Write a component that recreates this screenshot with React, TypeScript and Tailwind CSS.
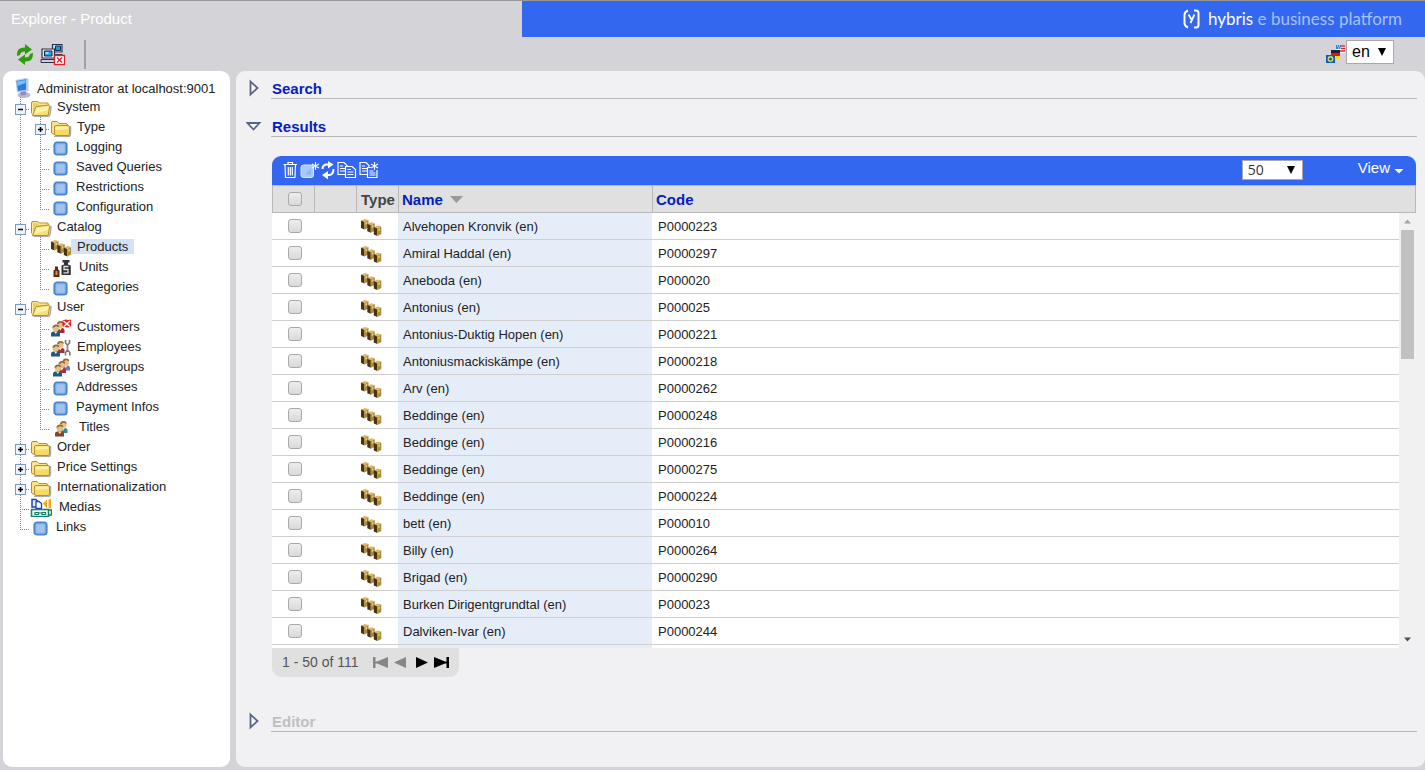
import type { ReactNode } from 'react'
import clsx from 'clsx'

type IconName =
  | 'open'
  | 'closed'
  | 'square'
  | 'boxes'
  | 'units'
  | 'customers'
  | 'employees'
  | 'usergroups'
  | 'titles'
  | 'medias'

type TreeNode = {
  label: string
  icon: IconName
  selected?: boolean
  children?: TreeNode[]
}

const tree: TreeNode[] = [
  {
    label: 'System',
    icon: 'open',
    children: [
      { label: 'Type', icon: 'closed' },
      { label: 'Logging', icon: 'square' },
      { label: 'Saved Queries', icon: 'square' },
      { label: 'Restrictions', icon: 'square' },
      { label: 'Configuration', icon: 'square' },
    ],
  },
  {
    label: 'Catalog',
    icon: 'open',
    children: [
      { label: 'Products', icon: 'boxes', selected: true },
      { label: 'Units', icon: 'units' },
      { label: 'Categories', icon: 'square' },
    ],
  },
  {
    label: 'User',
    icon: 'open',
    children: [
      { label: 'Customers', icon: 'customers' },
      { label: 'Employees', icon: 'employees' },
      { label: 'Usergroups', icon: 'usergroups' },
      { label: 'Addresses', icon: 'square' },
      { label: 'Payment Infos', icon: 'square' },
      { label: 'Titles', icon: 'titles' },
    ],
  },
  { label: 'Order', icon: 'closed' },
  { label: 'Price Settings', icon: 'closed' },
  { label: 'Internationalization', icon: 'closed' },
  { label: 'Medias', icon: 'medias' },
  { label: 'Links', icon: 'square' },
]

const products = [
  ['Alvehopen Kronvik (en)', 'P0000223'],
  ['Amiral Haddal (en)', 'P0000297'],
  ['Aneboda (en)', 'P000020'],
  ['Antonius (en)', 'P000025'],
  ['Antonius-Duktig Hopen (en)', 'P0000221'],
  ['Antoniusmackiskämpe (en)', 'P0000218'],
  ['Arv (en)', 'P0000262'],
  ['Beddinge (en)', 'P0000248'],
  ['Beddinge (en)', 'P0000216'],
  ['Beddinge (en)', 'P0000275'],
  ['Beddinge (en)', 'P0000224'],
  ['bett (en)', 'P000010'],
  ['Billy (en)', 'P0000264'],
  ['Brigad (en)', 'P0000290'],
  ['Burken Dirigentgrundtal (en)', 'P000023'],
  ['Dalviken-Ivar (en)', 'P0000244'],
]

function Box({ x, y }: { x: number; y: number }) {
  return (
    <g transform={`translate(${x} ${y})`}>
      <path d="M0 1.5 4 0 7.5 1 3.5 3z" fill="#d9b868" />
      <path d="M0 1.5 3.5 3V10.5L0 9z" fill="#4a330c" />
      <path d="M3.5 3 7.5 1V8.5L3.5 10.5z" fill="#b08a3a" />
      <path d="M4.5 3.5 6 2.8V5L4.5 5.8z" fill="#e6cd85" />
    </g>
  )
}

function BoxesIcon() {
  return (
    <svg width="21" height="18" viewBox="0 0 21 18" aria-hidden="true">
      <Box x={0} y={0} />
      <Box x={6.3} y={3.2} />
      <Box x={12.8} y={6.5} />
    </svg>
  )
}

function Person({ x, y, shirt }: { x: number; y: number; shirt: string }) {
  return (
    <g transform={`translate(${x} ${y})`}>
      <path d="M0 13V10.5Q0 8 2.500 8H6.500Q9 8 9 10.500V13z" fill={shirt} />
      <path d="M3 8H6.500L4.800 10.500z" fill="#f3e3c8" />
      <circle cx="4.800" cy="4.800" r="3.200" fill="#e8bf88" />
      <path d="M1.500 4.500Q1.500 1 5 1 8.300 1 8.200 3.800 6.500 3.500 5 2.600 3.500 4 1.500 4.500z" fill="#8f6a35" />
    </g>
  )
}

const iconWidths: Record<IconName, string> = {
  open: 'w-[21px]',
  closed: 'w-[21px]',
  square: 'w-5',
  boxes: 'w-[21px]',
  units: 'w-[23px]',
  customers: 'w-[21px]',
  employees: 'w-[21px]',
  usergroups: 'w-[21px]',
  titles: 'w-[23px]',
  medias: 'w-[23px]',
}

const drawings: Record<IconName, ReactNode> = {
  open: (
    <>
      <path d="M3.500 19.500H18Q19.500 19.500 20.300 16L21 9" fill="none" stroke="#777" strokeOpacity=".6" strokeWidth="1.500" />
      <path d="M1.500 16V6Q1.500 4.500 3 4.500H7.500L9.500 6H17Q18.500 6 18.500 7.500V17H3z" fill="#f2cd58" stroke="#b98d2b" />
      <path d="M2.500 17V6.500Q2.500 5.500 3.500 5.500H7L9 7.200H17" fill="none" stroke="#fdf0ae" />
      <path d="M2.500 18.500 5.500 10.500Q6 9.500 7 9.500L18.500 8Q20 8 19.700 9.500L18.500 17Q18.200 18.500 17 18.500z" fill="#fadf6e" stroke="#b98d2b" />
      <path d="M4.500 17 7 10.700 18.500 9.200 17.800 13z" fill="#fdf3b0" />
    </>
  ),
  closed: (
    <>
      <path d="M4 19.500H18.500Q20.500 19.500 20.500 17V9" fill="none" stroke="#777" strokeOpacity=".6" strokeWidth="1.500" />
      <path d="M1.500 16V6Q1.500 4.500 3 4.500H7L9 6.500H16Q17.500 6.500 17.500 8V17H3z" fill="#fbe58a" stroke="#b98d2b" />
      <path d="M4.500 17V10Q4.500 8.500 6 8.500H18Q19.500 8.500 19.500 10V17Q19.500 18.500 18 18.500H6Q4.500 18.500 4.500 17z" fill="#f9d966" stroke="#b98d2b" />
      <path d="M5.500 13V9.500H18.500V12z" fill="#fdefa6" />
    </>
  ),
  square: (
    <>
      <rect x="4.500" y="5.500" width="12" height="12" rx="2.500" fill="#a3c3ec" stroke="#4a86cf" strokeWidth="2.200" />
      <rect x="6" y="7" width="9" height="9" fill="none" stroke="#86aee4" strokeWidth=".8" />
    </>
  ),
  boxes: (
    <>
      <Box x={1} y={3} />
      <Box x={7.3} y={6.200} />
      <Box x={13.800} y={9} />
    </>
  ),
  units: (
    <>
      <path d="M3.500 13.500 5 12.500V9.500H8V12.500L9.500 13.500V20H3.500z" fill="#5b2c12" />
      <path d="M5.500 14H7.500V18H5.500z" fill="#d98b4c" />
      <path d="M11.500 8.500 14 7.500V5.500H12.500V3H19.500V5.500H18V7.500L20.800 8.500V18H11.500z" fill="#333" />
      <path d="M18.500 9.500H14V12.500H18V15.800H13.500" fill="none" stroke="#ddd" strokeWidth="1.300" />
    </>
  ),
  customers: (
    <>
      <Person x={5.500} y={3} shirt="#9c3038" />
      <Person x={1} y={6.500} shirt="#1d5a86" />
      <path d="M12.500 3.500 15.500 2.500 18.500 3 21 2.500V9.500L18 10.500 14.500 10 12.500 9z" fill="#ee1c24" />
      <path d="M13.500 4 20 9.500M20 4 14 9.500" stroke="#fff" strokeWidth="1.500" />
    </>
  ),
  employees: (
    <>
      <Person x={5.500} y={3} shirt="#9c3038" />
      <Person x={1} y={6.500} shirt="#1d5a86" />
      <path d="M15.500 3V6L17.500 8V13L15.500 15.500V18.500M19.500 3V6L17.500 8M17.500 13 19.800 15.500V18.500" fill="none" stroke="#777" strokeWidth="1.600" />
      <path d="M17 9v4" stroke="#bbb" strokeWidth=".8" />
    </>
  ),
  usergroups: (
    <>
      <Person x={11} y={0.500} shirt="#7277c4" />
      <Person x={7} y={3} shirt="#b32d3d" />
      <Person x={3} y={6.500} shirt="#1d5a86" />
    </>
  ),
  titles: (
    <>
      <Person x={8.500} y={3} shirt="#2c8b96" />
      <Person x={5} y={6.500} shirt="#84432a" />
    </>
  ),
  medias: (
    <>
      <path d="M2 2.500H6L8 4.500V10H2z" fill="#e7efff" stroke="#1b47b5" strokeWidth="1.500" />
      <path d="M6 4.500H9L11.500 6.500V11.500H6z" fill="#fff" stroke="#1b47b5" strokeWidth="1.300" />
      <path d="M13 6.500 17 2.500V11.500z" fill="#eda91c" />
      <path d="M18.500 3 21 1.500V12L18.500 10.500z" fill="#eda91c" />
      <path d="M1.500 12.500H18.500V19.500H1.500zM18.500 13H21.500V18H18.500" fill="#eefaf6" stroke="#14826c" strokeWidth="1.500" />
      <path d="M5 15.500h3.500v2H5zM12 15.500h3.500v2H12zM8 16h4" fill="none" stroke="#14826c" strokeWidth="1.200" />
    </>
  ),
}

function TreeIcon({ name }: { name: IconName }) {
  return (
    <span className={clsx('h-5 shrink-0', iconWidths[name])}>
      <svg width="22" height="20" viewBox="0 0 22 20" className="max-w-none" aria-hidden="true">
        {drawings[name]}
      </svg>
    </span>
  )
}

// one 20px cell of the dotted lines in front of a node
function Branch({ kind, last, toggle }: { kind: 'line' | 'elbow'; last?: boolean; toggle?: 'plus' | 'minus' }) {
  return (
    <svg width="20" height="20" viewBox="0 0 20 20" className="shrink-0" aria-hidden="true">
      <path d={last ? 'M10.500 0V13' : 'M10.500 0V20'} stroke="#808080" strokeDasharray="1 1" />
      {kind === 'elbow' && <path d="M10 12.500H20" stroke="#808080" strokeDasharray="1 1" />}
      {toggle && (
        <>
          <rect x="5.500" y="7.500" width="10" height="10" fill="#eef3fb" stroke="#7b9abf" />
          <path d="M8 12.500h5" stroke="#000" strokeWidth="1.500" />
          {toggle === 'plus' && <path d="M10.500 10v5" stroke="#000" strokeWidth="1.500" />}
        </>
      )}
    </svg>
  )
}

function TreeList({ nodes, depth = 0 }: { nodes: TreeNode[]; depth?: number }) {
  return (
    <ul>
      {nodes.map((node, i) => (
        <li key={node.label}>
          <div className="flex h-5 items-start">
            {depth > 0 && <Branch kind="line" />}
            <Branch
              kind="elbow"
              last={i === nodes.length - 1}
              toggle={node.children ? 'minus' : node.icon === 'closed' ? 'plus' : undefined}
            />
            <TreeIcon name={node.icon} />
            <a
              href="#"
              className={clsx('mt-0.5 px-1.5 leading-[15px] whitespace-nowrap', node.selected && 'bg-[#d3e2f5]')}
            >
              {node.label}
            </a>
          </div>
          {node.children && <TreeList nodes={node.children} depth={depth + 1} />}
        </li>
      ))}
    </ul>
  )
}

function Section({ title, open, disabled }: { title: string; open?: boolean; disabled?: boolean }) {
  return (
    <div className="flex h-7 shrink-0">
      <button type="button" aria-label={`Toggle ${title}`} className="flex w-[35px] items-center justify-center pt-1.5">
        <svg width="16" height="18" viewBox="0 0 16 18" aria-hidden="true">
          {open ? (
            <path d="M1.500 6H13.500L7.500 12.500z" fill="#f6f8ff" stroke="#5a6286" strokeWidth="1.800" />
          ) : (
            <path d="M4.500 2.500V15.500L11.500 9z" fill="#f6f8ff" stroke="#5a6286" strokeWidth="1.800" />
          )}
        </svg>
      </button>
      <h2
        className={clsx(
          'flex-1 border-b border-[#b8b8bc] pt-[9px] pl-px text-[15px] leading-[18px] font-bold',
          disabled ? 'text-[#bfbfc2]' : 'text-[#0420c4]'
        )}
      >
        {title}
      </h2>
    </div>
  )
}

function Columns() {
  return (
    <colgroup>
      <col className="w-[42px]" />
      <col className="w-[42px]" />
      <col className="w-[42px]" />
      <col className="w-[254px]" />
      <col />
    </colgroup>
  )
}

function Tick({ label }: { label: string }) {
  return (
    <input
      type="checkbox"
      aria-label={label}
      className="mx-auto block size-3.5 appearance-none rounded-[3px] border border-[#a9a9a9] bg-linear-to-b from-[#ededed] to-[#d9d9d9]"
    />
  )
}

function Star() {
  return <path d="M15.500 1v8M12 3l7 4M19 3l-7 4" stroke="#fff" strokeWidth="1.100" />
}

function ResultToolbar() {
  return (
    <div className="flex h-[29px] shrink-0 items-center rounded-t-[9px] bg-[#3467f0] pr-3 pb-px pl-[11px] text-white">
      <button type="button" aria-label="Delete" className="w-[17px]">
        <svg width="15" height="18" viewBox="0 0 15 18" fill="none" stroke="#fff" strokeWidth="1.200" aria-hidden="true">
          <path d="M.5 3.500H14M5 3V1.500H9.500V3M2 4 2.500 16.500H12L12.500 4M5.300 6v8.500M7.300 6v8.500M9.300 6v8.500" />
        </svg>
      </button>
      <button type="button" aria-label="Create" className="w-[21px]">
        <svg width="20" height="18" viewBox="0 0 20 18" fill="none" aria-hidden="true">
          <rect x="1" y="4" width="12.500" height="12.500" rx="2.500" fill="#a9c8fb" stroke="#dfeaff" />
          <path d="M5 13.500 11 7.500V13.500z" fill="#8db3f9" />
          <Star />
        </svg>
      </button>
      <button type="button" aria-label="Refresh" className="w-4">
        <svg width="14" height="20" viewBox="0 0 14 20" fill="none" aria-hidden="true">
          <path d="M1.500 9Q1.500 4.500 6 4.500H8" stroke="#fff" strokeWidth="2" />
          <path d="M7 1 12.500 4.500 7 8.500z" fill="#fff" />
          <path d="M12.500 9Q12.500 15 8 15H6" stroke="#fff" strokeWidth="2" />
          <path d="M7 11 1 15 7 19.500z" fill="#fff" />
        </svg>
      </button>
      <button type="button" aria-label="Copy" className="w-[22px]">
        <svg width="20" height="18" viewBox="0 0 20 18" fill="#3467f0" stroke="#fff" strokeWidth="1.200" aria-hidden="true">
          <path d="M1 1.500H7L10 4.500V13.500H1z" />
          <path d="M3 5h3M3 7.500h5M3 10h5" />
          <path d="M8.500 5.500H15L18.500 8.500V16.500H8.500z" />
          <path d="M10.500 8.500h3.500M10.500 11h6M10.500 13.500h6" />
        </svg>
      </button>
      <button type="button" aria-label="Copy and create" className="w-[22px]">
        <svg width="20" height="18" viewBox="0 0 20 18" fill="#3467f0" stroke="#fff" strokeWidth="1.200" aria-hidden="true">
          <path d="M1 1.500H7L10 4.500V13.500H1z" />
          <path d="M3 5h3M3 7.500h5M3 10h5" />
          <path d="M12 6.500H8.500V16.500H18V9" />
          <path d="M10.500 10h4M10.500 12h6M10.500 14h6" />
          <Star />
        </svg>
      </button>
      <div className="relative ml-auto">
        <select
          aria-label="Results per page"
          className="block h-5 w-[61px] appearance-none border border-[#a9a9a9] bg-white pl-[5px] font-['Open_Sans',sans-serif] text-[14px] leading-[18px] text-[#333]"
        >
          <option>50</option>
        </select>
        <svg width="8" height="8" viewBox="0 0 8 8" className="pointer-events-none absolute top-1.5 right-2" aria-hidden="true">
          <path d="M0 0H8L4 8z" fill="#000" />
        </svg>
      </div>
      <button type="button" className="ml-[55px] flex items-center gap-1 pb-1 text-[15px] leading-[18px]">
        View
        <svg width="10" height="12" viewBox="0 0 10 12" aria-hidden="true">
          <path d="M0.500 7H9.500L5 11.500z" fill="#fff" />
        </svg>
      </button>
    </div>
  )
}

function Results() {
  return (
    <div className="mt-[19px] mr-px ml-9 flex min-h-0 flex-1 flex-col">
      <ResultToolbar />
      <table className="w-full shrink-0 table-fixed border-separate border-spacing-0 border-t border-l border-[#b8b8b8] bg-[#e0e0e0] text-left text-[15px] leading-[18px] text-[#0420c4]">
        <Columns />
        <thead>
          <tr className="h-[27px]">
            <th className="border-r border-b border-[#b8b8b8] pl-0.5">
              <Tick label="Select all" />
            </th>
            <th className="border-r border-b border-[#b8b8b8]" />
            <th className="border-r border-b border-[#b8b8b8] pt-0.5 pl-1 text-[#444]">Type</th>
            <th className="border-r border-b border-[#b8b8b8] pt-0.5 pl-[3px]">
              Name
              <svg width="13" height="7" viewBox="0 0 13 7" className="mb-1 ml-[7px] inline-block" aria-hidden="true">
                <path d="M0 0H13L6.500 7z" fill="#999" />
              </svg>
            </th>
            <th className="border-r border-b border-[#b8b8b8] pt-0.5 pl-[3px]">Code</th>
          </tr>
        </thead>
      </table>
      <div className="flex min-h-0 flex-1">
        <div className="min-w-0 flex-1 overflow-hidden bg-white">
          <table className="w-full table-fixed border-separate border-spacing-0 text-[13px] leading-4">
            <Columns />
            <tbody>
              {products.map(([name, code]) => (
                <tr key={code} className="h-[27px]">
                  <td className="border-b border-[#cfcfcf] pl-1">
                    <Tick label={`Select ${name}`} />
                  </td>
                  <td className="border-b border-[#cfcfcf]" />
                  <td className="border-b border-[#cfcfcf] pt-1 pl-[5px]">
                    <BoxesIcon />
                  </td>
                  <td className="border-b border-[#cfcfcf] bg-[#e5edf9] pt-0.5 pl-[5px]">{name}</td>
                  <td className="border-b border-[#cfcfcf] pt-0.5 pl-1.5">{code}</td>
                </tr>
              ))}
              <tr className="h-[27px]">
                <td colSpan={3} />
                <td className="bg-[#e5edf9]" />
                <td />
              </tr>
            </tbody>
          </table>
        </div>
        <div className="flex w-[17px] flex-col items-center bg-[#f1f1f1] py-1.5">
          <svg width="7" height="5" viewBox="0 0 7 5" aria-hidden="true">
            <path d="M0 4.500H7L3.500 .5z" fill="#a3a3a3" />
          </svg>
          <div className="mt-1.5 h-[129px] w-[13px] bg-[#c1c1c1]" />
          <svg width="7" height="5" viewBox="0 0 7 5" className="mt-auto" aria-hidden="true">
            <path d="M0 .5H7L3.500 4.500z" fill="#505050" />
          </svg>
        </div>
      </div>
      <div className="flex h-[29px] w-[187px] shrink-0 items-center rounded-b-[9px] bg-[#e0e0e0] pl-2.5 text-[14px] text-[#555]">
        <span className="w-[91px] whitespace-nowrap">1 - 50 of 111</span>
        <button type="button" aria-label="First page" className="w-[21px]">
          <svg width="15" height="11" viewBox="0 0 15 11" fill="#868686" aria-hidden="true">
            <path d="M0 0H2.500V4.500H4L15 0V11L4 6.500H2.500V11H0z" />
          </svg>
        </button>
        <button type="button" aria-label="Previous page" className="w-[22px]">
          <svg width="12" height="11" viewBox="0 0 12 11" fill="#868686" aria-hidden="true">
            <path d="M0 5.500 12 0V11z" />
          </svg>
        </button>
        <button type="button" aria-label="Next page" className="w-[18px]">
          <svg width="12" height="11" viewBox="0 0 12 11" aria-hidden="true">
            <path d="M12 5.500 0 0V11z" />
          </svg>
        </button>
        <button type="button" aria-label="Last page">
          <svg width="15" height="11" viewBox="0 0 15 11" aria-hidden="true">
            <path d="M15 0H12.500V4.500H11L0 0V11L11 6.500H12.500V11H15z" />
          </svg>
        </button>
      </div>
    </div>
  )
}

function TopBar() {
  return (
    <header className="flex h-[37px] shrink-0 border-t border-[#989898]">
      <h1 className="w-[522px] pt-2 pl-[11px] text-[15px] leading-5 text-white">Explorer - Product</h1>
      <div className="flex flex-1 items-center justify-end bg-[#3467f0] pr-[23px]">
        <svg width="17" height="20" viewBox="0 0 17 20" fill="none" stroke="#fff" strokeWidth="2" aria-hidden="true">
          <path d="M5 1.500Q1.500 3 1.500 6V14Q1.500 17 5 18.500" />
          <path d="M11 1.500H13Q15.500 1.500 15.500 4V16Q15.500 18.500 13 18.500H11" />
          <path d="M5.500 5.500 8.500 10.500M11.500 5.500 7.500 14" strokeWidth="1.800" />
        </svg>
        <div className="ml-2 font-[Lato,'Liberation_Sans',sans-serif] text-[17px] leading-6 whitespace-nowrap">
          <span className="text-white">hybris</span> <span className="text-[#a6c2fc]">e business platform</span>
        </div>
      </div>
    </header>
  )
}

function MainToolbar() {
  return (
    <div className="flex h-[34px] shrink-0 items-center pr-[31px] pl-4">
      <button type="button" aria-label="Reload" className="w-6">
        <svg width="18" height="21" viewBox="0 0 18 21" fill="#2f9a0c" aria-hidden="true">
          <path d="M1 10Q1 3.500 8 3.500H9V0L16 5.500 9 10.500V7.500Q4.500 7.500 4 11L1 12z" />
          <path d="M17 10Q17 17.500 10 17.500H9V21L2 15.500 9 10.500V13.500Q13.500 13.500 14 10L17 9z" />
        </svg>
      </button>
      <button type="button" aria-label="Close session">
        <svg width="27" height="23" viewBox="0 0 27 23" aria-hidden="true">
          <path d="M12.500 1.500H22V9H12.500z" fill="#dcdce6" stroke="#2c3150" strokeWidth="1.200" />
          <path d="M15.500 3h5v4.500h-5z" fill="#179ae0" stroke="#15284d" />
          <path d="M11 11H22.500V13H11z" fill="#30364f" />
          <path d="M2 6H14.500V15H2z" fill="#e6e6f0" stroke="#2c3150" strokeWidth="1.200" />
          <path d="M4.500 8h7.500v5H4.500z" fill="#1ea4ea" stroke="#15284d" />
          <path d="M5.500 9h3v2h-3z" fill="#9fe2ff" />
          <path d="M1 16.500H15.500V19.500H1z" fill="#cfcfe0" stroke="#2c3150" />
          <path d="M14.500 12.500h10v9h-10z" fill="#fff" stroke="#d8232a" strokeWidth="1.300" />
          <path d="M17 14.500 22 19.500M22 14.500 17 19.500" stroke="#d8232a" strokeWidth="1.400" />
        </svg>
      </button>
      <div className="ml-[17px] h-[29px] w-0.5 bg-[#a2a2a4]" />
      <svg width="20" height="18" viewBox="0 0 20 18" className="ml-auto" aria-hidden="true">
        <path d="M10 0H19V8H10z" fill="#fff" />
        <path d="M15 1h4M15 3.500h4M14 6h5" stroke="#e8202a" strokeWidth="1.300" />
        <path d="M10 0H15V4H10z" fill="#3b7ce0" />
        <path d="M11 1h1M13 1h1M12 3h1M14 3h1" stroke="#fff" />
        <path d="M5 5h9v3H5z" fill="#222" />
        <path d="M5 8h9v3H5z" fill="#e3131b" />
        <path d="M5 11h9v3H5z" fill="#f9da16" />
        <path d="M0 10h9v8H0z" fill="#1358c8" />
        <circle cx="4.500" cy="14" r="2.200" fill="none" stroke="#d5e02c" strokeWidth="1.400" />
      </svg>
      <div className="relative pb-1">
        <select
          aria-label="Language"
          className="block h-6 w-12 appearance-none border border-[#a9a9a9] bg-white pl-[5px] text-[16px] leading-5 text-black"
        >
          <option>en</option>
        </select>
        <svg width="8" height="8" viewBox="0 0 8 8" className="pointer-events-none absolute top-2 right-2" aria-hidden="true">
          <path d="M0 0H8L4 8z" fill="#000" />
        </svg>
      </div>
    </div>
  )
}

export default function App() {
  return (
    <div className="flex h-screen flex-col bg-[#d4d3d8] font-['Liberation_Sans',Arial,sans-serif] text-[13px] text-[#222]">
      <TopBar />
      <MainToolbar />
      <div className="flex min-h-0 flex-1 gap-1.5 pb-[3px] pl-[3px]">
        <nav aria-label="Explorer" className="w-[227px] shrink-0 overflow-hidden rounded-[9px] bg-white pt-1.5 pl-[7px]">
          <div className="flex h-5 items-start">
            <svg width="19" height="22" viewBox="0 0 19 22" className="ml-1 shrink-0" aria-hidden="true">
              <ellipse cx="10" cy="18" rx="6.500" ry="3" fill="#b9b6d8" />
              <path d="M6 14 12 13V18L7 18.500z" fill="#8d8dc0" />
              <path d="M1.500 3 12.500 1 14.500 2V14L3 15.500z" fill="#b9c9ea" />
              <path d="M2.500 4 12 2.300V12.800L4 14z" fill="#2b7be0" />
              <path d="M3 4.500 11.500 3V6L3.500 9z" fill="#72c4f8" />
            </svg>
            <a href="#" className="pt-1 pl-1 leading-[15px] whitespace-nowrap">
              Administrator at localhost:9001
            </a>
          </div>
          <TreeList nodes={tree} />
        </nav>
        <main className="flex min-w-0 flex-1 flex-col rounded-[9px] bg-[#f1f1f4] pr-2 pb-[35px]">
          <Section title="Search" />
          <div className="h-2.5 shrink-0" />
          <Section title="Results" open />
          <Results />
          <div className="h-[27px] shrink-0" />
          <Section title="Editor" disabled />
        </main>
      </div>
    </div>
  )
}
